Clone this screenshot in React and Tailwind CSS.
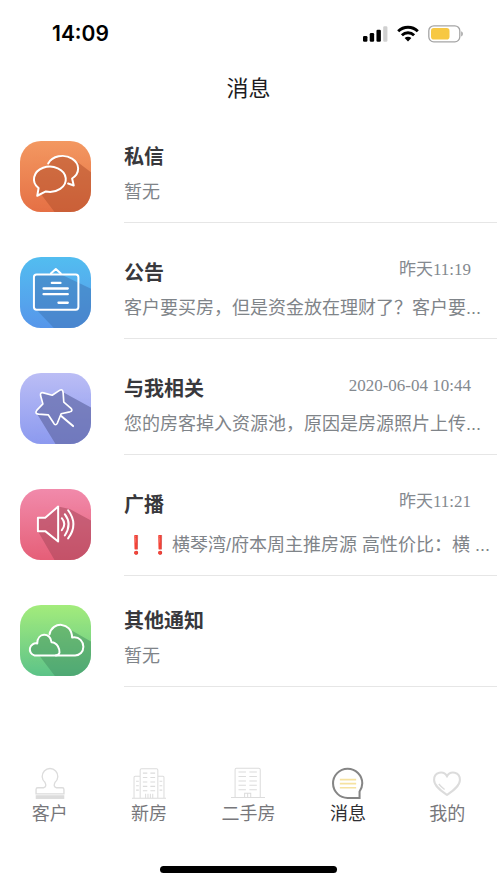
import { useState } from 'react';

const messages = [
  { id: 'private', title: '私信', text: '暂无', icon: ChatIcon, tile: 'from-[#f39861] to-[#e57045]' },
  { id: 'notice', title: '公告', text: '客户要买房，但是资金放在理财了？客户要...', time: '昨天11:19', icon: BoardIcon, tile: 'from-[#52bdf0] to-[#5696ea]' },
  { id: 'related', title: '与我相关', text: '您的房客掉入资源池，原因是房源照片上传...', time: '2020-06-04 10:44', icon: StarIcon, tile: 'from-[#bbbdf5] to-[#8c9aef]' },
  { id: 'broadcast', title: '广播', text: '横琴湾/府本周主推房源 高性价比：横 ...', time: '昨天11:21', urgent: true, icon: SpeakerIcon, tile: 'from-[#f18aab] to-[#e55f78]' },
  { id: 'other', title: '其他通知', text: '暂无', icon: CloudIcon, tile: 'from-[#a3ec7b] to-[#5cc388]' },
];

const tabs = [
  { id: 'customer', label: '客户', icon: StampIcon },
  { id: 'new', label: '新房', icon: TowersIcon },
  { id: 'used', label: '二手房', icon: TowerIcon },
  { id: 'message', label: '消息', icon: MessageIcon },
  { id: 'mine', label: '我的', icon: HeartIcon },
];

export default function App() {
  const [active, setActive] = useState('message');

  return (
    <div className="min-h-screen w-full bg-white flex flex-col font-['Liberation_Sans','Noto_Sans_CJK_SC',sans-serif]">
      <StatusBar />

      <header className="h-11 flex items-center justify-center">
        <h1 className="text-[22px] leading-8 text-[#1c1c1e]">消息</h1>
      </header>

      <main className="flex-1 pt-[30px]">
        <ul>
          {messages.map((m) => <MessageRow key={m.id} {...m} />)}
        </ul>
      </main>

      <nav className="grid grid-cols-5 pb-10">
        {tabs.map(({ id, label, icon: Icon }) => (
          <a
            key={id}
            href={`#${id}`}
            onClick={() => setActive(id)}
            className={`flex flex-col items-center text-lg leading-6 ${active === id ? 'text-[#2f2f33]' : 'text-[#77777b]'}`}
          >
            <Icon />
            {label}
          </a>
        ))}
      </nav>

      {/* Home indicator */}
      <div className="w-[177px] h-[7px] mb-[10px] mx-auto rounded-full bg-black" />
    </div>
  );
}

function StatusBar() {
  return (
    <div className="h-[67px] pl-[52px] pr-[33px] flex items-center justify-between">
      <span className="font-['Inter',sans-serif] font-semibold text-[21px] leading-6 text-black">14:09</span>
      <div className="flex items-center gap-[9px]">
        <svg width="25" height="17" viewBox="0 0 26 17">
          <rect x="0" y="11" width="4.6" height="6" rx="1.3" />
          <rect x="7" y="8" width="4.6" height="9" rx="1.3" />
          <rect x="14" y="4.5" width="4.6" height="12.5" rx="1.3" />
          <rect x="21" y="1" width="4.4" height="16" rx="1.3" fill="#d0d0d0" />
        </svg>
        <svg width="22" height="17" viewBox="0 0 22 17" fill="none" stroke="#000" strokeWidth="2.9">
          <path d="M1.2 6.2a14 14 0 0 1 19.6 0" />
          <path d="M4.9 10.2a8.8 8.8 0 0 1 12.2 0" />
          <path d="M11 16.4 7.6 13a4.9 4.9 0 0 1 6.8 0Z" fill="#000" stroke="none" />
        </svg>
        <svg width="36" height="18" viewBox="0 0 36 18">
          <rect x="0.8" y="0.8" width="31" height="16" rx="5" fill="none" stroke="#a5a5a5" strokeWidth="1.3" />
          <rect x="3" y="3" width="18.5" height="11.6" rx="2.8" fill="#f7c843" />
          <path d="M33.2 6.2v5.2c2.2-.8 2.2-4.4 0-5.2Z" fill="#a5a5a5" />
        </svg>
      </div>
    </div>
  );
}

function MessageRow({ id, title, text, time, urgent, icon: Icon, tile }) {
  return (
    <li className="h-[116px]">
      <a href={`#${id}`} className="flex items-start pl-5">
        <div className={`size-[71px] rounded-[21px] overflow-hidden shrink-0 bg-linear-to-b ${tile}`}>
          <Icon />
        </div>
        <div className="flex-1 min-w-0 ml-[33px] pb-[15px] border-b border-[#e6e6e6]">
          <div className="flex items-start justify-between pr-[26px]">
            <h2 className="text-xl leading-8 font-bold text-[#38383c]">{title}</h2>
            {time && (
              <time className="font-['Liberation_Serif','Noto_Sans_CJK_SC',serif] text-[17px] leading-normal text-[#84898f]">{time}</time>
            )}
          </div>
          <p className={`mt-1 text-lg leading-[30px] text-[#7f8489] whitespace-nowrap overflow-hidden ${urgent ? 'pt-[5px]' : ''}`}>
            {urgent && <Urgent />}
            {urgent && <Urgent />}
            {text}
          </p>
        </div>
      </a>
    </li>
  );
}

function Urgent() {
  return <span className="inline-block w-6 text-center font-bold text-[#c9211e]">❗</span>;
}

function TileIcon({ shadow, width = 6, children }) {
  return (
    <svg className="size-full" viewBox="0 0 214 214" fill="none" stroke="#fff" strokeWidth={width} strokeLinecap="round" strokeLinejoin="round">
      <g className={shadow} stroke="none">{children[0]}</g>
      {children[1]}
    </svg>
  );
}

function ChatIcon() {
  const front = 'M52 165 56 142A48 38 0 1 1 78 152Z';
  const back = 'M85 68A47 38 0 1 1 157 113L162 134 145 128';
  return (
    <TileIcon shadow="fill-[#b5532f] opacity-55">
      <><path d={front} /><path d="M85 68A47 38 0 0 1 166 58L214 94V214H104L54 148 100 110Z" /></>
      <><path d={front} /><path d={back} /></>
    </TileIcon>
  );
}

function BoardIcon() {
  return (
    <TileIcon shadow="fill-[#4079b8] opacity-55" width={6}>
      <path d="M42 61Q42 53 50 53H124L214 96V214H102L42 151Z" />
      <>
        <rect x="42" y="53" width="134" height="106" rx="8" />
        <path d="M93 50 108 36 123 50" />
        <path d="M96 78H122M71 95H144M71 112H144M116 138H144" strokeWidth="7" />
      </>
    </TileIcon>
  );
}

function StarIcon() {
  const star = 'M69 93 62 68Q60 57 71 60L97 67 118 53Q129 46 130 59L132 88 153 106Q161 114 150 117L124 123 113 150Q107 162 101 150L85 126 56 124Q43 122 51 112Z';
  return (
    <TileIcon shadow="fill-[#646ca8] opacity-70" width={5}>
      <><path d={star} /><path d="M130 58 214 104V214H107L52 124 100 100Z" /></>
      <><path d={star} /><path d="M125 130 160 160" strokeWidth="6" /></>
    </TileIcon>
  );
}

function SpeakerIcon() {
  const horn = 'M54 87H76L115 53V158L76 127H54Z';
  return (
    <TileIcon shadow="fill-[#a9475b] opacity-55">
      <><path d={horn} /><path d="M115 53 150 60 214 95V214H104L54 127 115 100Z" /></>
      <>
        <path d={horn} />
        <path d="M126 88Q141 106 126 124M135 76Q158 106 135 140M145 64Q177 106 145 149" />
      </>
    </TileIcon>
  );
}

function CloudIcon() {
  const small = 'M44 152A18 18 0 0 1 52 116C52 82 92 82 95 112C113 112 120 134 119 143Q117 152 106 152Z';
  const big = 'M89 88C97 48 156 50 157 98C180 94 191 112 191 126C191 141 180 152 166 152H108';
  return (
    <TileIcon shadow="fill-[#3f8a5e] opacity-45">
      <><path d={small} /><path d="M89 88C95 60 130 48 148 72L214 110V214H105L58 152 100 140Z" /></>
      <><path d={big} /><path d={small} /></>
    </TileIcon>
  );
}

function TabIcon({ color = '#dcdcdc', width = 4, children }) {
  return (
    <svg className="size-[34px] mb-px" viewBox="0 0 100 100" fill="none" stroke={color} strokeWidth={width}>
      {children}
    </svg>
  );
}

function StampIcon() {
  return (
    <TabIcon>
      <path d="M9 79V66Q9 61 14 61H31Q42 58 35 45A23 23 0 1 1 65 45Q58 58 69 61H86Q91 61 91 66V79Z" />
      <rect x="8" y="83" width="84" height="11" fill="#dcdcdc" stroke="none" />
    </TabIcon>
  );
}

function TowersIcon() {
  return (
    <TabIcon width={3}>
      <path d="M24 92V9Q24 5 28 5H72Q76 5 76 9V92M24 27H9Q6 27 6 30V92M76 27H91Q94 27 94 30V92M0 92H100" />
      <path d="M32 18H45M54 18H68M32 31H45M54 31H68M32 44H45M54 44H68M32 57H45M54 57H68M32 70H45M54 70H68" />
      <path d="M12 42H20M12 55H20M12 68H20M81 42H89M81 55H89M81 68H89M40 92V79M47 92V79M54 92V79M61 92V79" />
    </TabIcon>
  );
}

function TowerIcon() {
  return (
    <TabIcon width={3}>
      <path d="M12 90V8Q12 4 16 4H82Q86 4 86 8V90M0 90H100" />
      <path d="M22 15H44M54 15H76M22 28H44M54 28H76M22 41H44M54 41H76M22 54H44M54 54H76M22 67H44M54 67H76" />
      <path d="M40 90V77H58V90M49 90V77" />
    </TabIcon>
  );
}

function MessageIcon() {
  return (
    <TabIcon color="#858585" width={6}>
      <path d="M50 91A43 43 0 1 1 92 48Q92 60 84 72V91Z" />
      <path d="M26 37H74M26 49H74M26 61H74" stroke="#f6e2a0" strokeWidth="5" />
    </TabIcon>
  );
}

function HeartIcon() {
  return (
    <TabIcon width={6}>
      <path d="M50 82C34 71 12 56 12 38C12 14 40 10 50 27C60 10 88 14 88 38C88 56 66 71 50 82Z" />
      <path d="M26 50Q32 58 43 66" strokeWidth="4" />
    </TabIcon>
  );
}
